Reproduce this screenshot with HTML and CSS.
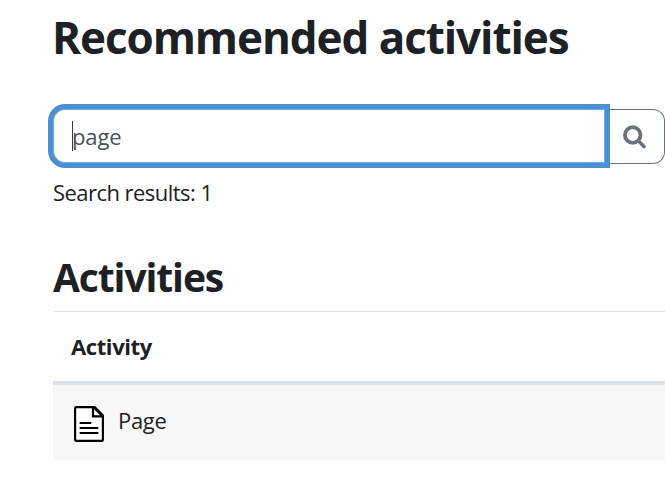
FILE: index.html
```html
<!DOCTYPE html>
<html lang="en">
<head>
    <meta charset="utf-8">
    <title>Recommended activities</title>
    <link rel="stylesheet" href="styles.css">
</head>
<body>
    <div class="page">
        <h1 class="page-title">Recommended activities</h1>
        <form class="search-group">
            <div class="search-input"><span class="caret"></span><span class="search-text">page</span></div>
            <button class="search-button" type="button" aria-label="Search">
                <svg class="search-icon" viewBox="0 0 24 24">
                    <circle cx="9.7" cy="10" r="7.8" fill="none" stroke="currentColor" stroke-width="3.8"/>
                    <path d="M15.5 16l5.5 5.5" fill="none" stroke="currentColor" stroke-width="3.6" stroke-linecap="round"/>
                </svg>
            </button>
        </form>
        <p class="results">Search results: 1</p>
        <h2 class="section-title">Activities</h2>
        <table class="activities">
            <thead>
                <tr><th>Activity</th></tr>
            </thead>
            <tbody>
                <tr>
                    <td>
                        <div class="activity">
                            <svg class="activity-icon" viewBox="0 0 30 36">
                                <path d="M2 1.1H20.5L28.9 9.5V34a1 1 0 0 1-1 .9H2a1 1 0 0 1-.9-.9V2a1 1 0 0 1 .9-.9z" fill="#fff" stroke="#000" stroke-width="2.2"/>
                                <path d="M19 1V10.3H29" fill="#fff" stroke="#000" stroke-width="2.2"/>
                                <path d="M20 1.2L28.8 10" fill="none" stroke="#000" stroke-width="2.8"/>
                                <path d="M6.5 17H16.5M6.5 22H23.5M6.5 27H23.5" fill="none" stroke="#000" stroke-width="2.2" stroke-linecap="round"/>
                            </svg>
                            <span class="activity-name">Page</span>
                        </div>
                    </td>
                </tr>
            </tbody>
        </table>
    </div>
</body>
</html>
```
FILE: styles.css
```css
body {
    margin: 0;
    background-color: #fff;
    color: #1d2125;
    font-family: "Segoe UI", "Open Sans", "Noto Sans", sans-serif;
    font-size: 22px;
    line-height: 34px;
    overflow: hidden;
}

.page {
    padding: 10px 0 0 53px;
}

.page-title {
    margin: 0 0 45px -1px;
    font-size: 44px;
    line-height: 54px;
    font-weight: 700;
    letter-spacing: -1.06px;
    white-space: nowrap;
}

.search-group {
    display: flex;
    height: 55px;
    margin: 0 0 11px;
}

.search-input {
    display: flex;
    align-items: center;
    box-sizing: border-box;
    width: 552px;
    height: 54px;
    padding-left: 18px;
    border: 1px solid #66afff;
    border-radius: 12px 0 0 12px;
    box-shadow: 0 0 0 5px #4a90d2;
    color: #495057;
}

.search-input,
.search-button {
    background-color: #fff;
}

.caret {
    width: 1px;
    height: 30px;
    background-color: #343a40;
}

.search-text {
    margin-left: -1px;
    letter-spacing: -0.1px;
}

.search-button {
    display: flex;
    flex: 1;
    align-items: center;
    justify-content: center;
    margin-left: 5px;
    padding: 1px 4px 0 0;
    border: 1px solid #6a737b;
    border-left: 0;
    border-radius: 0 12px 12px 0;
    color: #6a737b;
}

.search-icon {
    width: 24px;
    height: 24px;
}

.results {
    margin: 0 0 45px;
    letter-spacing: -0.54px;
}

.section-title {
    margin: 0 0 11px;
    font-size: 39px;
    line-height: 46px;
    font-weight: 700;
    letter-spacing: -1.1px;
}

.activities {
    width: 100%;
    border-collapse: separate;
    border-spacing: 0;
}

.activities th {
    height: 67px;
    padding: 0 18px 2px;
    border-top: 1px solid #dee2e6;
    border-bottom: 4px solid #dee2e6;
    text-align: left;
    letter-spacing: -0.4px;
}

.activities td {
    height: 75px;
    padding: 0 21px;
    background-color: #f7f7f7;
}

.activity {
    display: flex;
    align-items: center;
    gap: 15px;
}

.activity-icon {
    width: 30px;
    height: 36px;
    margin-top: 3px;
}

.activity-name {
    margin: -5px 0 0 -1px;
    letter-spacing: -0.3px;
}
```
